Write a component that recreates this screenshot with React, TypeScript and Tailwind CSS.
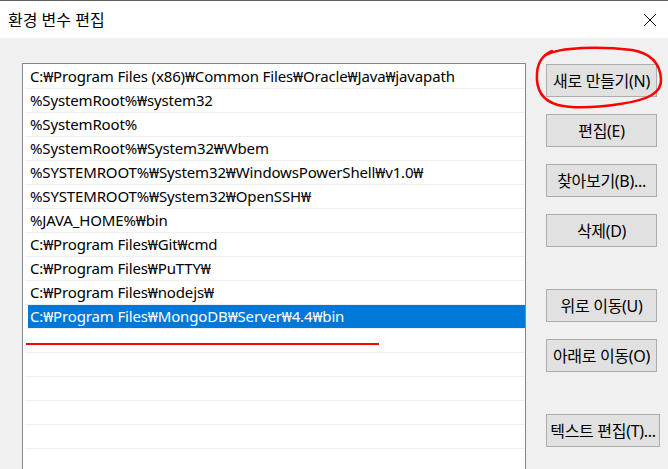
import React from "react";

const rows = [
  "C:₩Program Files (x86)₩Common Files₩Oracle₩Java₩javapath",
  "%SystemRoot%₩system32",
  "%SystemRoot%",
  "%SystemRoot%₩System32₩Wbem",
  "%SYSTEMROOT%₩System32₩WindowsPowerShell₩v1.0₩",
  "%SYSTEMROOT%₩System32₩OpenSSH₩",
  "%JAVA_HOME%₩bin",
  "C:₩Program Files₩Git₩cmd",
  "C:₩Program Files₩PuTTY₩",
  "C:₩Program Files₩nodejs₩",
  "C:₩Program Files₩MongoDB₩Server₩4.4₩bin",
  "",
  "",
  "",
  "",
  "",
  "",
];

const font = { fontFamily: '"Noto Sans", "Noto Sans CJK KR", sans-serif' };

function Btn({ label, wide }: { label: string; wide?: boolean }) {
  return (
    <div
      className={`${wide ? "w-[114px]" : "w-[111px]"} h-[33px] shrink-0 flex items-center justify-center border border-[#adadad] bg-[#e1e1e1] text-[16px] tracking-[-0.3px] text-black whitespace-nowrap`}
    >
      {label}
    </div>
  );
}

export default function App() {
  return (
    <div
      className="relative w-[668px] h-[469px] overflow-hidden bg-[#f0f0f0] flex flex-col border-t border-[#5f5f5f]"
      style={font}
    >
      <div className="h-[37px] shrink-0 bg-white flex items-center justify-between pl-2 pr-[10px]">
        <span className="text-[16px] text-black leading-none">환경 변수 편집</span>
        <svg width="14" height="14" viewBox="0 0 14 14" className="mr-[1px]">
          <path d="M1 1 L13 13 M13 1 L1 13" stroke="#000" strokeWidth="1" fill="none" />
        </svg>
      </div>
      <div className="flex-1 flex pl-[22px] pt-[25px]">
        <div className="w-[504px] h-[420px] shrink-0 border border-[#828790] bg-white pt-[1px] pl-[2px]">
          {rows.map((r, i) => {
            const sel = i === 10;
            return (
              <div key={i} className="h-[24px] border-b border-[#efefef]">
                <div
                  className={`ml-[3px] h-[23px] pl-[2px] flex items-center text-[15px] tracking-[-0.15px] whitespace-nowrap ${
                    sel ? "bg-[#0078d7] text-white" : "text-black"
                  }`}
                >
                  {r}
                </div>
              </div>
            );
          })}
        </div>
        <div className="ml-[20px] pt-[1px] flex flex-col">
          <Btn label="새로 만들기(N)" />
          <div className="h-[17px]" />
          <Btn label="편집(E)" />
          <div className="h-[17px]" />
          <Btn label="찾아보기(B)..." />
          <div className="h-[17px]" />
          <Btn label="삭제(D)" />
          <div className="h-[42px]" />
          <Btn label="위로 이동(U)" />
          <div className="h-[17px]" />
          <Btn label="아래로 이동(O)" />
          <div className="h-[42px]" />
          <Btn label="텍스트 편집(T)..." wide />
        </div>
      </div>
      <svg className="absolute left-0 top-0 pointer-events-none" width="668" height="469">
        <path
          d="M546 54 C560 46 600 45 632 49 C650 52 660 62 661 78 C662 92 648 99 620 103 C600 106 575 108 558 104 C540 99 536 85 537 72 C538 60 543 54 552 50"
          stroke="#ff0000"
          strokeWidth="2.5"
          fill="none"
          strokeLinecap="round"
        />
        <path d="M26 343 L379 343" stroke="#ff0000" strokeWidth="2" />
      </svg>
    </div>
  );
}
